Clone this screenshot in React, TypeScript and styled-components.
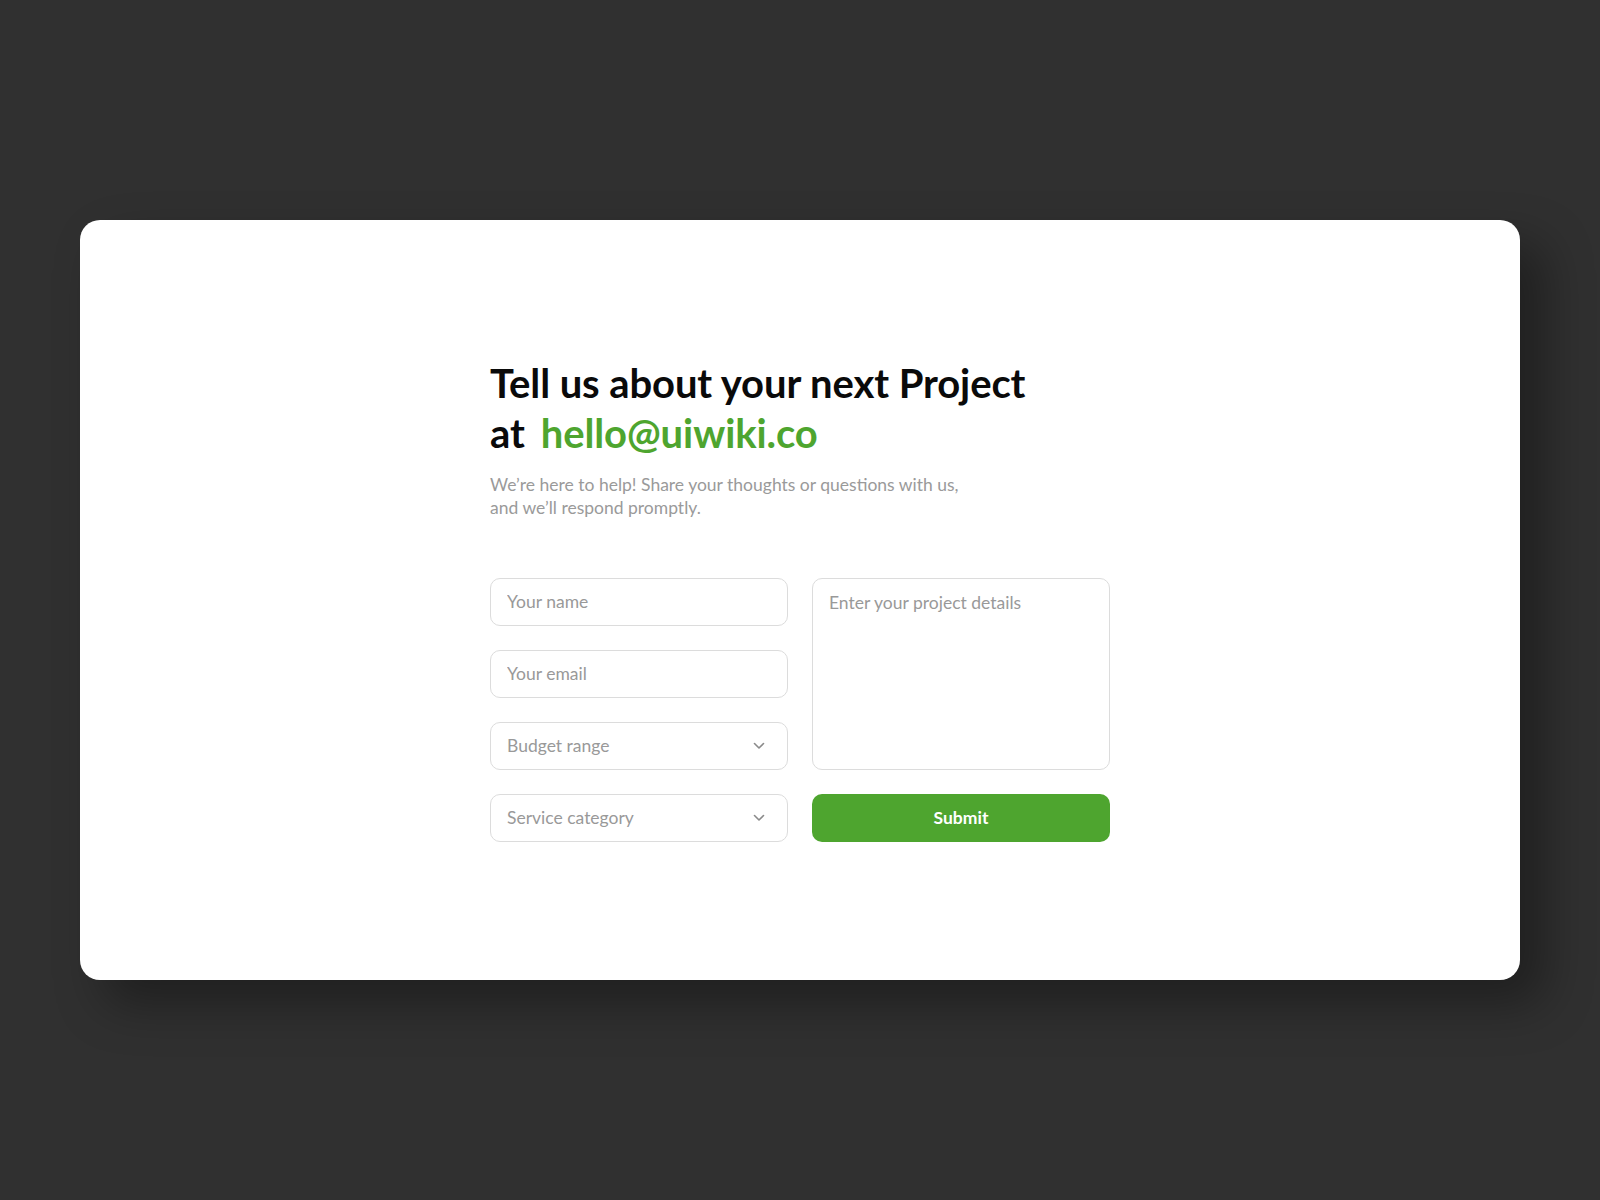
import styled, { createGlobalStyle } from 'styled-components';

const GlobalStyle = createGlobalStyle`
  * {
    box-sizing: border-box;
  }
  body {
    margin: 0;
    background-color: #303030;
    font-family: 'Lato', 'Noto Sans', sans-serif;
  }
`;

const Page = styled.div`
  width: 100vw;
  height: 100vh;
  display: flex;
  align-items: center;
  justify-content: center;
`;

const Card = styled.div`
  width: 1440px;
  height: 760px;
  background-color: #ffffff;
  border-radius: 20px;
  box-shadow: 24px 24px 48px rgba(0, 0, 0, 0.35);
  display: flex;
  align-items: center;
  justify-content: center;
`;

const Content = styled.div`
  width: 620px;
  margin-top: -1px;
  display: flex;
  flex-direction: column;
`;

const Title = styled.h1`
  margin: 0;
  font-size: 40px;
  line-height: 50px;
  font-weight: 700;
  color: #0a0a0a;
  letter-spacing: -0.1px;
`;

const Mail = styled.span`
  color: #4ea52f;
  margin-left: 16px;
`;

const Sub = styled.p`
  margin: 15px 0 0;
  width: 490px;
  font-size: 17.5px;
  line-height: 23px;
  color: #9a9a9a;
`;

const FormGrid = styled.form`
  margin-top: 59px;
  display: grid;
  grid-template-columns: 1fr 1fr;
  grid-template-rows: repeat(4, 48px);
  gap: 24px;
`;

const Field = styled.input`
  height: 48px;
  width: 100%;
  border: 1px solid #dcdcdc;
  border-radius: 10px;
  padding: 0 16px;
  font-family: inherit;
  font-size: 17.5px;
  color: #333;
  outline: none;
  &::placeholder {
    color: #999;
  }
`;

const SelectBox = styled.div`
  position: relative;
  height: 48px;
  border: 1px solid #dcdcdc;
  border-radius: 10px;
  padding: 0 16px;
  display: flex;
  align-items: center;
  justify-content: space-between;
  font-size: 17.5px;
  color: #999;
  cursor: pointer;
  svg {
    margin-right: 6px;
  }
`;

const Details = styled.textarea`
  grid-column: 2;
  grid-row: 1 / span 3;
  border: 1px solid #dcdcdc;
  border-radius: 10px;
  padding: 13px 16px;
  font-family: inherit;
  font-size: 17.5px;
  line-height: 22px;
  resize: none;
  outline: none;
  &::placeholder {
    color: #999;
  }
`;

const Submit = styled.button`
  grid-column: 2;
  grid-row: 4;
  height: 48px;
  border: none;
  border-radius: 10px;
  background-color: #4ea52f;
  color: #ffffff;
  font-family: inherit;
  font-size: 17.5px;
  font-weight: 700;
  cursor: pointer;
`;

const Chevron = () => (
  <svg width="12" height="8" viewBox="0 0 12 8" fill="none">
    <path d="M1.5 1.5L6 6L10.5 1.5" stroke="#8a8a8a" strokeWidth="1.6" strokeLinecap="round" strokeLinejoin="round" />
  </svg>
);

function Select({ label }: { label: string }) {
  return (
    <SelectBox>
      <span>{label}</span>
      <Chevron />
    </SelectBox>
  );
}

export default function App() {
  return (
    <>
      <GlobalStyle />
      <Page>
        <Card>
          <Content>
            <Title>
              Tell us about your next Project
              <br />
              at<Mail>hello@uiwiki.co</Mail>
            </Title>
            <Sub>
              We’re here to help! Share your thoughts or questions with us, and we’ll respond promptly.
            </Sub>
            <FormGrid onSubmit={(e) => e.preventDefault()}>
              <Field placeholder="Your name" style={{ gridColumn: 1, gridRow: 1 }} />
              <Details placeholder="Enter your project details" />
              <Field placeholder="Your email" style={{ gridColumn: 1, gridRow: 2 }} />
              <Select label="Budget range" />
              <Select label="Service category" />
              <Submit type="submit">Submit</Submit>
            </FormGrid>
          </Content>
        </Card>
      </Page>
    </>
  );
}
